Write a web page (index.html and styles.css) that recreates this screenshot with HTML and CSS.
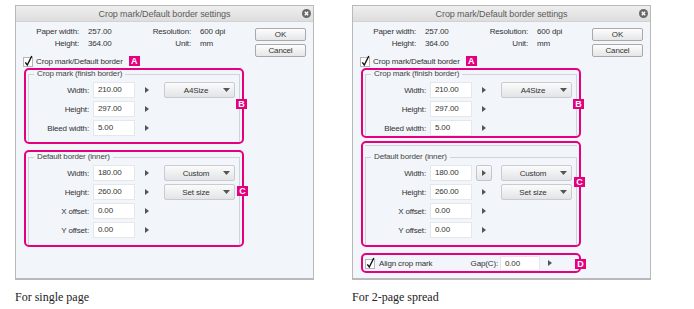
FILE: index.html
```html
<!DOCTYPE html>
<html lang="en">
<head>
    <meta charset="UTF-8">
    <meta name="viewport" content="width=device-width, initial-scale=1.0">
    <title>Crop mark/Default border settings</title>
    <link rel="stylesheet" href="styles.css">
</head>
<body>
    <main class="sheet">
        <!-- single page -->
        <figure class="shot">
            <section class="dialog">
                <header class="titlebar">
                    <span class="title">Crop mark/Default border settings</span>
                    <svg class="close" width="9" height="9" viewBox="0 0 9 9"><circle cx="4.5" cy="4.5" r="4.5" fill="#686868"/><path d="M2.8 2.8 L6.2 6.2 M6.2 2.8 L2.8 6.2" stroke="#fff" stroke-width="1.4"/></svg>
                </header>
                <div class="dialog-body">
                    <div class="main">
                        <div class="info">
                            <span class="k">Paper width:</span><span class="v">257.00</span><span class="k">Resolution:</span><span class="v">600 dpi</span>
                            <span class="k">Height:</span><span class="v">364.00</span><span class="k">Unit:</span><span class="v">mm</span>
                        </div>
                        <div class="check-row">
                            <svg class="check" width="11" height="12" viewBox="0 0 11 12"><rect x="0.5" y="2.5" width="9" height="9" fill="#fff" stroke="#b5b5b5"/><path d="M2.3 7.3 L4.3 10 L8.8 1" fill="none" stroke="#111" stroke-width="1.4"/></svg>
                            <span>Crop mark/Default border</span>
                            <span class="badge">A</span>
                        </div>
                        <div class="mark mark-b">
                            <fieldset class="group">
                                <legend>Crop mark (finish border)</legend>
                                <div class="row">
                                    <span class="label">Width:</span><span class="field">210.00</span>
                                    <span class="step"><svg width="4" height="6" viewBox="0 0 4 6"><path d="M0 0 L4 3 L0 6Z" fill="#555"/></svg></span>
                                    <span class="select"><span>A4Size</span><svg width="7" height="4" viewBox="0 0 7 4"><path d="M0 0 L7 0 L3.5 4Z" fill="#555"/></svg></span>
                                </div>
                                <div class="row">
                                    <span class="label">Height:</span><span class="field">297.00</span>
                                    <span class="step"><svg width="4" height="6" viewBox="0 0 4 6"><path d="M0 0 L4 3 L0 6Z" fill="#555"/></svg></span>
                                </div>
                                <div class="row">
                                    <span class="label">Bleed width:</span><span class="field">5.00</span>
                                    <span class="step"><svg width="4" height="6" viewBox="0 0 4 6"><path d="M0 0 L4 3 L0 6Z" fill="#555"/></svg></span>
                                </div>
                            </fieldset>
                            <span class="badge badge-b">B</span>
                        </div>
                        <div class="mark mark-c">
                            <fieldset class="group">
                                <legend>Default border (inner)</legend>
                                <div class="row">
                                    <span class="label">Width:</span><span class="field">180.00</span>
                                    <span class="step"><svg width="4" height="6" viewBox="0 0 4 6"><path d="M0 0 L4 3 L0 6Z" fill="#555"/></svg></span>
                                    <span class="select"><span>Custom</span><svg width="7" height="4" viewBox="0 0 7 4"><path d="M0 0 L7 0 L3.5 4Z" fill="#555"/></svg></span>
                                </div>
                                <div class="row">
                                    <span class="label">Height:</span><span class="field">260.00</span>
                                    <span class="step"><svg width="4" height="6" viewBox="0 0 4 6"><path d="M0 0 L4 3 L0 6Z" fill="#555"/></svg></span>
                                    <span class="select"><span>Set size</span><svg width="7" height="4" viewBox="0 0 7 4"><path d="M0 0 L7 0 L3.5 4Z" fill="#555"/></svg></span>
                                </div>
                                <div class="row">
                                    <span class="label">X offset:</span><span class="field">0.00</span>
                                    <span class="step"><svg width="4" height="6" viewBox="0 0 4 6"><path d="M0 0 L4 3 L0 6Z" fill="#555"/></svg></span>
                                </div>
                                <div class="row">
                                    <span class="label">Y offset:</span><span class="field">0.00</span>
                                    <span class="step"><svg width="4" height="6" viewBox="0 0 4 6"><path d="M0 0 L4 3 L0 6Z" fill="#555"/></svg></span>
                                </div>
                            </fieldset>
                            <span class="badge badge-c">C</span>
                        </div>
                    </div>
                    <div class="buttons">
                        <button class="btn">OK</button>
                        <button class="btn">Cancel</button>
                    </div>
                </div>
            </section>
            <figcaption>For single page</figcaption>
        </figure>

        <!-- 2-page spread -->
        <figure class="shot">
            <section class="dialog">
                <header class="titlebar">
                    <span class="title">Crop mark/Default border settings</span>
                    <svg class="close" width="9" height="9" viewBox="0 0 9 9"><circle cx="4.5" cy="4.5" r="4.5" fill="#686868"/><path d="M2.8 2.8 L6.2 6.2 M6.2 2.8 L2.8 6.2" stroke="#fff" stroke-width="1.4"/></svg>
                </header>
                <div class="dialog-body">
                    <div class="main">
                        <div class="info">
                            <span class="k">Paper width:</span><span class="v">257.00</span><span class="k">Resolution:</span><span class="v">600 dpi</span>
                            <span class="k">Height:</span><span class="v">364.00</span><span class="k">Unit:</span><span class="v">mm</span>
                        </div>
                        <div class="check-row">
                            <svg class="check" width="11" height="12" viewBox="0 0 11 12"><rect x="0.5" y="2.5" width="9" height="9" fill="#fff" stroke="#b5b5b5"/><path d="M2.3 7.3 L4.3 10 L8.8 1" fill="none" stroke="#111" stroke-width="1.4"/></svg>
                            <span>Crop mark/Default border</span>
                            <span class="badge">A</span>
                        </div>
                        <div class="mark mark-b tight">
                            <fieldset class="group">
                                <legend>Crop mark (finish border)</legend>
                                <div class="row">
                                    <span class="label">Width:</span><span class="field">210.00</span>
                                    <span class="step"><svg width="4" height="6" viewBox="0 0 4 6"><path d="M0 0 L4 3 L0 6Z" fill="#555"/></svg></span>
                                    <span class="select"><span>A4Size</span><svg width="7" height="4" viewBox="0 0 7 4"><path d="M0 0 L7 0 L3.5 4Z" fill="#555"/></svg></span>
                                </div>
                                <div class="row">
                                    <span class="label">Height:</span><span class="field">297.00</span>
                                    <span class="step"><svg width="4" height="6" viewBox="0 0 4 6"><path d="M0 0 L4 3 L0 6Z" fill="#555"/></svg></span>
                                </div>
                                <div class="row">
                                    <span class="label">Bleed width:</span><span class="field">5.00</span>
                                    <span class="step"><svg width="4" height="6" viewBox="0 0 4 6"><path d="M0 0 L4 3 L0 6Z" fill="#555"/></svg></span>
                                </div>
                            </fieldset>
                            <span class="badge badge-b">B</span>
                        </div>
                        <div class="mark mark-c spread">
                            <div class="sep"></div>
                            <fieldset class="group">
                                <legend>Default border (inner)</legend>
                                <div class="row">
                                    <span class="label">Width:</span><span class="field">180.00</span>
                                    <span class="step pressed"><svg width="4" height="6" viewBox="0 0 4 6"><path d="M0 0 L4 3 L0 6Z" fill="#555"/></svg></span>
                                    <span class="select"><span>Custom</span><svg width="7" height="4" viewBox="0 0 7 4"><path d="M0 0 L7 0 L3.5 4Z" fill="#555"/></svg></span>
                                </div>
                                <div class="row">
                                    <span class="label">Height:</span><span class="field">260.00</span>
                                    <span class="step"><svg width="4" height="6" viewBox="0 0 4 6"><path d="M0 0 L4 3 L0 6Z" fill="#555"/></svg></span>
                                    <span class="select"><span>Set size</span><svg width="7" height="4" viewBox="0 0 7 4"><path d="M0 0 L7 0 L3.5 4Z" fill="#555"/></svg></span>
                                </div>
                                <div class="row">
                                    <span class="label">X offset:</span><span class="field">0.00</span>
                                    <span class="step"><svg width="4" height="6" viewBox="0 0 4 6"><path d="M0 0 L4 3 L0 6Z" fill="#555"/></svg></span>
                                </div>
                                <div class="row">
                                    <span class="label">Y offset:</span><span class="field">0.00</span>
                                    <span class="step"><svg width="4" height="6" viewBox="0 0 4 6"><path d="M0 0 L4 3 L0 6Z" fill="#555"/></svg></span>
                                </div>
                            </fieldset>
                            <span class="badge badge-c">C</span>
                        </div>
                        <div class="mark mark-d">
                            <svg class="check" width="11" height="12" viewBox="0 0 11 12"><rect x="0.5" y="2.5" width="9" height="9" fill="#fff" stroke="#b5b5b5"/><path d="M2.3 7.3 L4.3 10 L8.8 1" fill="none" stroke="#111" stroke-width="1.4"/></svg>
                            <span class="align-text">Align crop mark</span>
                            <span class="gap-label">Gap(C):</span>
                            <span class="field small">0.00</span>
                            <span class="step"><svg width="4" height="6" viewBox="0 0 4 6"><path d="M0 0 L4 3 L0 6Z" fill="#555"/></svg></span>
                            <span class="badge badge-d">D</span>
                        </div>
                    </div>
                    <div class="buttons">
                        <button class="btn">OK</button>
                        <button class="btn">Cancel</button>
                    </div>
                </div>
            </section>
            <figcaption>For 2-page spread</figcaption>
        </figure>
    </main>
</body>
</html>
```

FILE: styles.css
```css
body {
    margin: 0;
    background-color: #fff;
    font-family: "Liberation Sans", Arial, sans-serif;
}

.sheet {
    display: flex;
    gap: 38px;
    padding: 5px 0 0 15px;
}

.shot {
    margin: 0;
}

.dialog {
    width: 299px;
    height: 275px;
    box-sizing: border-box;
    border: 1px solid #b9b9b9;
    border-bottom-width: 2px;
    background-color: #f2f5fa;
    display: flex;
    flex-direction: column;
    font-size: 8px;
    letter-spacing: -0.15px;
    color: #333;
}

.titlebar {
    height: 15px;
    border-bottom: 1px solid #d2d2d2;
    background: linear-gradient(#efefef, #dddddd);
    display: flex;
    align-items: center;
    justify-content: center;
    position: relative;
}

.title {
    font-size: 9px;
    color: #5c5c5c;
    letter-spacing: -0.1px;
}

.close {
    position: absolute;
    right: 2px;
    top: 3px;
}

.dialog-body {
    flex: 1;
    display: flex;
    padding: 4px 7px 0 7px;
}

.main {
    flex: 1;
}

.info {
    display: grid;
    grid-template-columns: 56px 40px 54px auto;
    column-gap: 9px;
    line-height: 12px;
}

.info .k {
    text-align: right;
}

.check-row {
    display: flex;
    align-items: center;
    height: 12px;
    margin-top: 5px;
}

.check {
    margin-right: 2px;
    flex-shrink: 0;
}

.badge {
    display: inline-flex;
    align-items: center;
    justify-content: center;
    width: 11px;
    height: 10px;
    background-color: #e4007f;
    color: #fff;
    font-weight: bold;
    font-size: 9px;
    letter-spacing: 0;
    margin-left: 6px;
}

.mark {
    position: relative;
    width: 220px;
    box-sizing: border-box;
    margin-left: 1px;
    border: 2px solid #e4007f;
    border-radius: 5px;
    padding: 0 2px;
}

.mark-b {
    margin-top: 1px;
}

.mark-c {
    margin-top: 6px;
}

.mark .badge {
    position: absolute;
    margin: 0;
}

.badge-b {
    right: -5px;
    top: 29px;
}

.badge-c {
    right: -6px;
    top: 34px;
}

.group {
    margin: 0;
    padding: 4px 0 6px 0;
    border: 1px solid #cfd4da;
    border-bottom: none;
    min-width: 0;
}

.group legend {
    padding: 0 3px;
    margin-left: 5px;
    line-height: 8px;
    color: #444;
}

.mark-c .group {
    margin-top: 1px;
    padding-bottom: 7px;
}

.row {
    display: flex;
    align-items: center;
    height: 16px;
}

.row + .row {
    margin-top: 3px;
}

.label {
    width: 60px;
    text-align: right;
}

.field {
    width: 42px;
    height: 16px;
    box-sizing: border-box;
    margin-left: 4px;
    padding-left: 4px;
    background-color: #fff;
    border: 1px solid #e4e7eb;
    line-height: 14px;
}

.step {
    width: 16px;
    height: 16px;
    box-sizing: border-box;
    margin-left: 4px;
    display: flex;
    align-items: center;
    justify-content: center;
}

.step.pressed {
    border: 1px solid #c3c6ca;
    border-radius: 2px;
    background: linear-gradient(#fbfbfb, #e3e5e8);
}

.select {
    width: 71px;
    height: 16px;
    box-sizing: border-box;
    margin-left: 9px;
    border: 1px solid #c8ccd1;
    border-radius: 2px;
    background: linear-gradient(#fbfbfb, #e2e4e7);
    display: flex;
    align-items: center;
}

.select span {
    flex: 1;
    text-align: center;
    padding-left: 4px;
}

.select svg {
    margin-right: 4px;
}

.buttons {
    width: 51px;
    display: flex;
    flex-direction: column;
    gap: 3px;
    padding-top: 2px;
}

.btn {
    height: 13px;
    padding: 0;
    border: 1px solid #a9a9a9;
    border-radius: 2px;
    background: linear-gradient(#fdfdfd, #e6e6e6);
    font-family: inherit;
    font-size: 8px;
    letter-spacing: -0.15px;
    color: #333;
    line-height: 11px;
}

/* 2-page spread variant */
.mark.tight .group {
    padding-bottom: 0;
}

.mark-c.spread {
    margin-top: 3px;
}

.sep {
    height: 1px;
    margin-top: 2px;
    background-color: #cfd4da;
}

.mark-c.spread .group {
    margin-top: 7px;
}

.mark-d {
    margin-top: 6px;
    height: 20px;
    display: flex;
    align-items: center;
}

.mark-d .check {
    margin-right: 3px;
}

.align-text {
    width: 90px;
}

.gap-label {
    width: 29px;
    text-align: right;
}

.field.small {
    width: 40px;
    height: 15px;
    margin-left: 2px;
}

.mark-d .step {
    margin-left: 2px;
}

.badge-d {
    right: -7px;
    top: 4px;
}

figcaption {
    margin-top: 10px;
    font-family: "Liberation Serif", "Times New Roman", serif;
    font-size: 12px;
    color: #222;
}
```
